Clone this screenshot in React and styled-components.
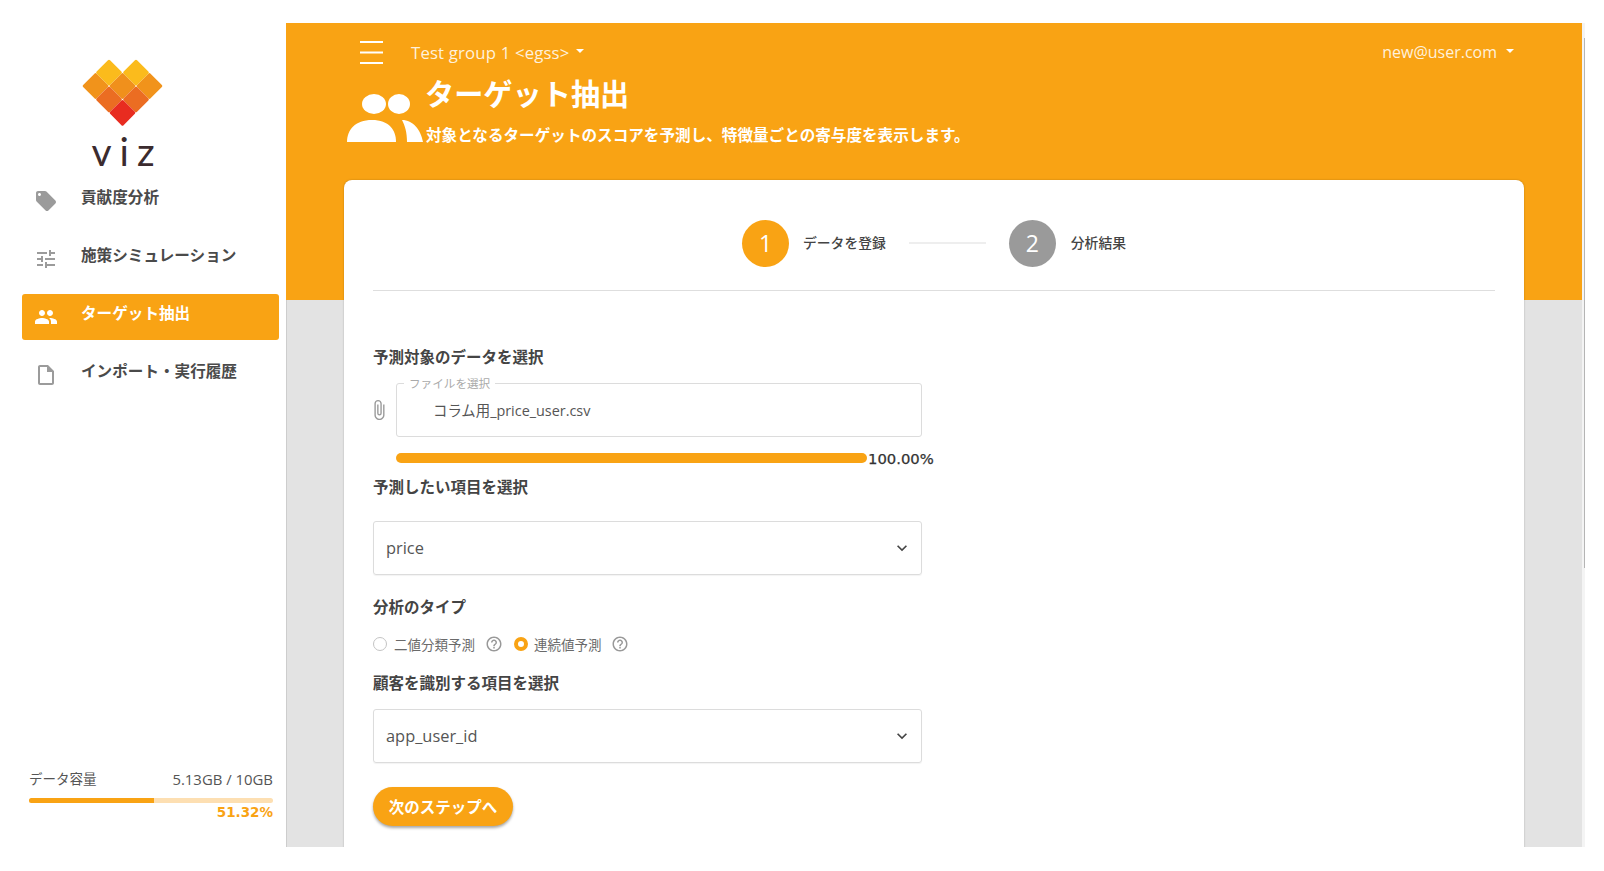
import React from "react";
import styled, { createGlobalStyle } from "styled-components";
import { MdLocalOffer, MdTune, MdPeople, MdOutlineInsertDriveFile, MdAttachFile, MdHelpOutline, MdKeyboardArrowDown } from "react-icons/md";

const ORANGE = "#f9a314";
const FONT = `"Open Sans", "Noto Sans CJK JP", sans-serif`;

const Global = createGlobalStyle`
  html, body { margin: 0; padding: 0; background: #fff; }
  body { font-family: ${FONT}; color: #444; }
  * { box-sizing: border-box; }
`;

const Page = styled.div`
  display: flex;
  width: 1604px;
  height: 871px;
  padding: 23px 0 24px;
  overflow: hidden;
  background: #fff;
`;

const Sidebar = styled.aside`
  flex: 0 0 286px;
  display: flex;
  flex-direction: column;
`;

const Brand = styled.div`
  height: 155px;
  padding: 36px 0 0 81.5px;
  display: flex;
  flex-direction: column;
`;

const BrandName = styled.div`
  font-family: Lato, sans-serif;
  font-weight: 400;
  font-size: 39px;
  line-height: 39px;
  letter-spacing: 8px;
  color: #3b2b2e;
  margin: 5px 0 0 10px;
`;

const Nav = styled.nav`
  display: flex;
  flex-direction: column;
  gap: 12px;
  margin-left: 22px;
  width: 257px;
`;

const NavRow = styled.a`
  display: flex;
  align-items: center;
  gap: 23px;
  height: 46px;
  padding-left: 12px;
  border-radius: 3px;
  background: ${(p) => (p.$active ? ORANGE : "transparent")};
  color: ${(p) => (p.$active ? "#fff" : "#4a4a4a")};
  svg { flex: none; color: ${(p) => (p.$active ? "#fff" : "#9b9b9b")}; }
`;

const NavLabel = styled.span`
  font-size: 15.6px;
  font-weight: 700;
  line-height: 24px;
  padding-bottom: 9px;
`;

const Storage = styled.div`
  margin-top: auto;
  padding: 0 13px 26px 29px;
`;

const StorageHead = styled.div`
  display: flex;
  justify-content: space-between;
  font-size: 13.5px;
  line-height: 20px;
  color: #555;
`;

const StorageUsed = styled.span`
  font-size: 14.9px;
`;

const StorageTrack = styled.div`
  height: 5px;
  margin-top: 9px;
  border-radius: 3px;
  background: #fddfb2;
  overflow: hidden;
`;

const StorageFill = styled.div`
  height: 100%;
  background: ${ORANGE};
`;

const StoragePct = styled.div`
  text-align: right;
  font-family: "DejaVu Sans", sans-serif;
  font-size: 13.5px;
  font-weight: 700;
  line-height: 18px;
  color: ${ORANGE};
`;

const Main = styled.main`
  flex: 0 0 1296px;
  padding: 0 58px;
  overflow: hidden;
  background:
    linear-gradient(${ORANGE} 0 277px, transparent 277px),
    linear-gradient(90deg, #cdcdcd 1px, #e3e3e3 1px);
`;

const ScrollRail = styled.div`
  flex: 0 0 3px;
  padding: 15px 0 0 2px;
  background: #f4f4f4;
`;

const ScrollThumb = styled.div`
  width: 1px;
  height: 530px;
  background: #b5b5b5;
`;

const TopBar = styled.header`
  display: flex;
  align-items: center;
  height: 54px;
  padding: 4px 10px 0 16px;
  color: #fff1dc;
  font-size: 15px;
`;

const GroupName = styled.span`
  margin-left: 28px;
  display: flex;
  align-items: center;
  gap: 6px;
  font-size: 16.8px;
  letter-spacing: 0.15px;
`;

const UserName = styled.span`
  margin-left: auto;
  display: flex;
  align-items: center;
  gap: 9px;
  font-size: 16px;
`;

const Caret = styled.i`
  width: 0;
  height: 0;
  margin-top: -2px;
  border-left: 4.5px solid transparent;
  border-right: 4.5px solid transparent;
  border-top: 4.5px solid #fff;
`;

const Hero = styled.section`
  display: flex;
  padding-left: 1px;
  margin-bottom: 33px;
  color: #fff;
`;

const HeroIcon = styled.svg`
  flex: none;
  width: 80px;
  height: 54px;
  margin-top: 13px;
`;

const HeroTitle = styled.h1`
  margin: -1px 0 0;
  font-size: 29.2px;
  font-weight: 700;
  line-height: 36px;
`;

const HeroText = styled.p`
  margin: 11px 0 0 1px;
  font-size: 15.6px;
  font-weight: 700;
  line-height: 24px;
`;

const Card = styled.div`
  height: 700px;
  padding: 40px 29px 0;
  background: #fff;
  border-radius: 8px 8px 0 0;
  box-shadow: 0 0 2px rgba(0, 0, 0, 0.25);
`;

const Stepper = styled.div`
  display: flex;
  align-items: center;
  justify-content: center;
  padding-bottom: 23px;
  border-bottom: 1px solid #dedede;
`;

const StepDot = styled.span`
  flex: none;
  display: flex;
  align-items: center;
  justify-content: center;
  width: 47px;
  height: 47px;
  padding-bottom: 2px;
  border-radius: 50%;
  background: ${(p) => (p.$on ? ORANGE : "#9a9a9a")};
  color: #fff;
  font-size: 23px;
`;

const StepLabel = styled.span`
  margin: 0 0 4px ${(p) => p.$gap}px;
  font-size: 13.8px;
  font-weight: 500;
  color: #444;
`;

const StepLine = styled.span`
  width: 77px;
  height: 2px;
  margin: 0 23px 2px 23px;
  background: #eeeeee;
`;

const Heading = styled.h2`
  margin: ${(p) => p.$top}px 0 0;
  font-size: 15.5px;
  font-weight: 700;
  line-height: 24px;
  color: #444;
`;

const FileRow = styled.div`
  display: flex;
  align-items: center;
  margin-top: 14px;
  color: #999;
`;

const ClipSlot = styled.span`
  flex: 0 0 23px;
  display: flex;
  margin-left: -5px;
  margin-right: 5px;
`;

const FileBox = styled.div`
  position: relative;
  display: flex;
  align-items: center;
  width: 526px;
  height: 54px;
  padding: 0 0 2px 36px;
  border: 1px solid #dcdcdc;
  border-radius: 3px;
  font-size: 14.4px;
  color: #555;
`;

const FileLegend = styled.span`
  position: absolute;
  top: -8px;
  left: 7px;
  padding: 0 5px;
  background: #fff;
  font-size: 11.6px;
  line-height: 15px;
  color: #aaa;
`;

const UploadRow = styled.div`
  display: flex;
  align-items: center;
  height: 20px;
  margin: 11px 0 0 23px;
`;

const UploadBar = styled.div`
  width: 471px;
  height: 10px;
  border-radius: 5px;
  background: ${ORANGE};
`;

const UploadPct = styled.span`
  margin-left: 1px;
  font-family: "DejaVu Sans", sans-serif;
  font-size: 14.8px;
  color: #333;
  -webkit-text-stroke: 0.25px #333;
`;

const SelectBox = styled.div`
  display: flex;
  align-items: center;
  justify-content: space-between;
  width: 549px;
  height: 54px;
  margin-top: ${(p) => p.$top}px;
  padding: 0 9px 1px 12px;
  border: 1px solid #dcdcdc;
  border-radius: 3px;
  font-size: 16.4px;
  color: #555;
  box-shadow: 0 1px 1px rgba(0, 0, 0, 0.05);
`;

const RadioRow = styled.div`
  display: flex;
  align-items: center;
  height: 20px;
  margin-top: 15px;
  font-size: 13.5px;
  color: #6a6a6a;
`;

const Radio = styled.span`
  flex: none;
  width: 14px;
  height: 14px;
  border-radius: 50%;
  border: ${(p) => (p.$on ? `4px solid ${ORANGE}` : "1px solid #c4c4c4")};
  margin-right: ${(p) => (p.$on ? 6 : 7)}px;
`;

const Help = styled(MdHelpOutline)`
  flex: none;
  margin: 0 ${(p) => p.$after}px 0 ${(p) => p.$before}px;
  color: #999;
`;

const NextButton = styled.button`
  display: block;
  width: 140px;
  height: 39px;
  margin-top: 24px;
  padding: 0;
  border: 0;
  border-radius: 20px;
  background: ${ORANGE};
  box-shadow: 0 2px 3px rgba(0, 0, 0, 0.35);
  color: #fff;
  font-family: ${FONT};
  font-size: 15.5px;
  font-weight: 700;
`;

// Heart logo built from eight rounded diamonds.
const Logo = () => {
  const cells = [
    [27, 13.6, "#fbbb1c"], [54, 13.6, "#fbbb1c"],
    [13.5, 27, "#f1931b"], [40.5, 27, "#f0901c"], [67.5, 27, "#f1931b"],
    [27, 40.4, "#eb6d22"], [54, 40.4, "#eb6d22"],
    [40.5, 53.8, "#e82c20"],
  ];
  return (
    <svg width="81" height="68" viewBox="0 0 81 68">
      {cells.map(([x, y, c]) => (
        <rect key={`${x}-${y}`} x={x - 9.5} y={y - 9.5} width="19" height="19" rx="1.5" fill={c} transform={`rotate(45 ${x} ${y})`} />
      ))}
    </svg>
  );
};

const Burger = () => (
  <svg width="23" height="23" viewBox="0 0 23 23" stroke="#fff" strokeWidth="2">
    <path d="M0 1h23M0 11.5h23M0 22h23" />
  </svg>
);

export default function App() {
  return (
    <>
      <Global />
      <Page>
        <Sidebar>
          <Brand>
            <Logo />
            <BrandName>viz</BrandName>
          </Brand>
          <Nav>
            <NavRow><MdLocalOffer size={24} /><NavLabel>貢献度分析</NavLabel></NavRow>
            <NavRow><MdTune size={24} /><NavLabel>施策シミュレーション</NavLabel></NavRow>
            <NavRow $active><MdPeople size={24} /><NavLabel>ターゲット抽出</NavLabel></NavRow>
            <NavRow><MdOutlineInsertDriveFile size={24} /><NavLabel>インポート・実行履歴</NavLabel></NavRow>
          </Nav>
          <Storage>
            <StorageHead><span>データ容量</span><StorageUsed>5.13GB / 10GB</StorageUsed></StorageHead>
            <StorageTrack><StorageFill style={{ width: "51.32%" }} /></StorageTrack>
            <StoragePct>51.32%</StoragePct>
          </Storage>
        </Sidebar>
        <Main>
          <TopBar>
            <Burger />
            <GroupName>Test group 1 &lt;egss&gt;<Caret /></GroupName>
            <UserName>new@user.com<Caret /></UserName>
          </TopBar>
          <Hero>
            <HeroIcon viewBox="0 0 80 54" fill="#fff">
              <ellipse cx="29" cy="14" rx="12" ry="10" />
              <ellipse cx="54" cy="14" rx="11" ry="10" />
              <path d="M2 52C2 40 10 30 27 30C44 30 51 40 51 52Z" />
              <path d="M57 30C68 30 76 40 78 52L62 52C62 42 60 36 57 30Z" />
            </HeroIcon>
            <div>
              <HeroTitle>ターゲット抽出</HeroTitle>
              <HeroText>対象となるターゲットのスコアを予測し、特徴量ごとの寄与度を表示します。</HeroText>
            </div>
          </Hero>
          <Card>
            <Stepper>
              <StepDot $on>1</StepDot>
              <StepLabel $gap={14}>データを登録</StepLabel>
              <StepLine />
              <StepDot>2</StepDot>
              <StepLabel $gap={15}>分析結果</StepLabel>
            </Stepper>
            <Heading $top={54}>予測対象のデータを選択</Heading>
            <FileRow>
              <ClipSlot><MdAttachFile size={22} /></ClipSlot>
              <FileBox>
                <FileLegend>ファイルを選択</FileLegend>
                コラム用_price_user.csv
              </FileBox>
            </FileRow>
            <UploadRow>
              <UploadBar />
              <UploadPct>100.00%</UploadPct>
            </UploadRow>
            <Heading $top={7}>予測したい項目を選択</Heading>
            <SelectBox $top={22}>price<MdKeyboardArrowDown size={20} color="#444" /></SelectBox>
            <Heading $top={20}>分析のタイプ</Heading>
            <RadioRow>
              <Radio />
              二値分類予測
              <Help size={18} $before={10} $after={11} />
              <Radio $on />
              連続値予測
              <Help size={18} $before={9} $after={0} />
            </RadioRow>
            <Heading $top={17}>顧客を識別する項目を選択</Heading>
            <SelectBox $top={14}>app_user_id<MdKeyboardArrowDown size={20} color="#444" /></SelectBox>
            <NextButton>次のステップへ</NextButton>
          </Card>
        </Main>
        <ScrollRail><ScrollThumb /></ScrollRail>
      </Page>
    </>
  );
}
